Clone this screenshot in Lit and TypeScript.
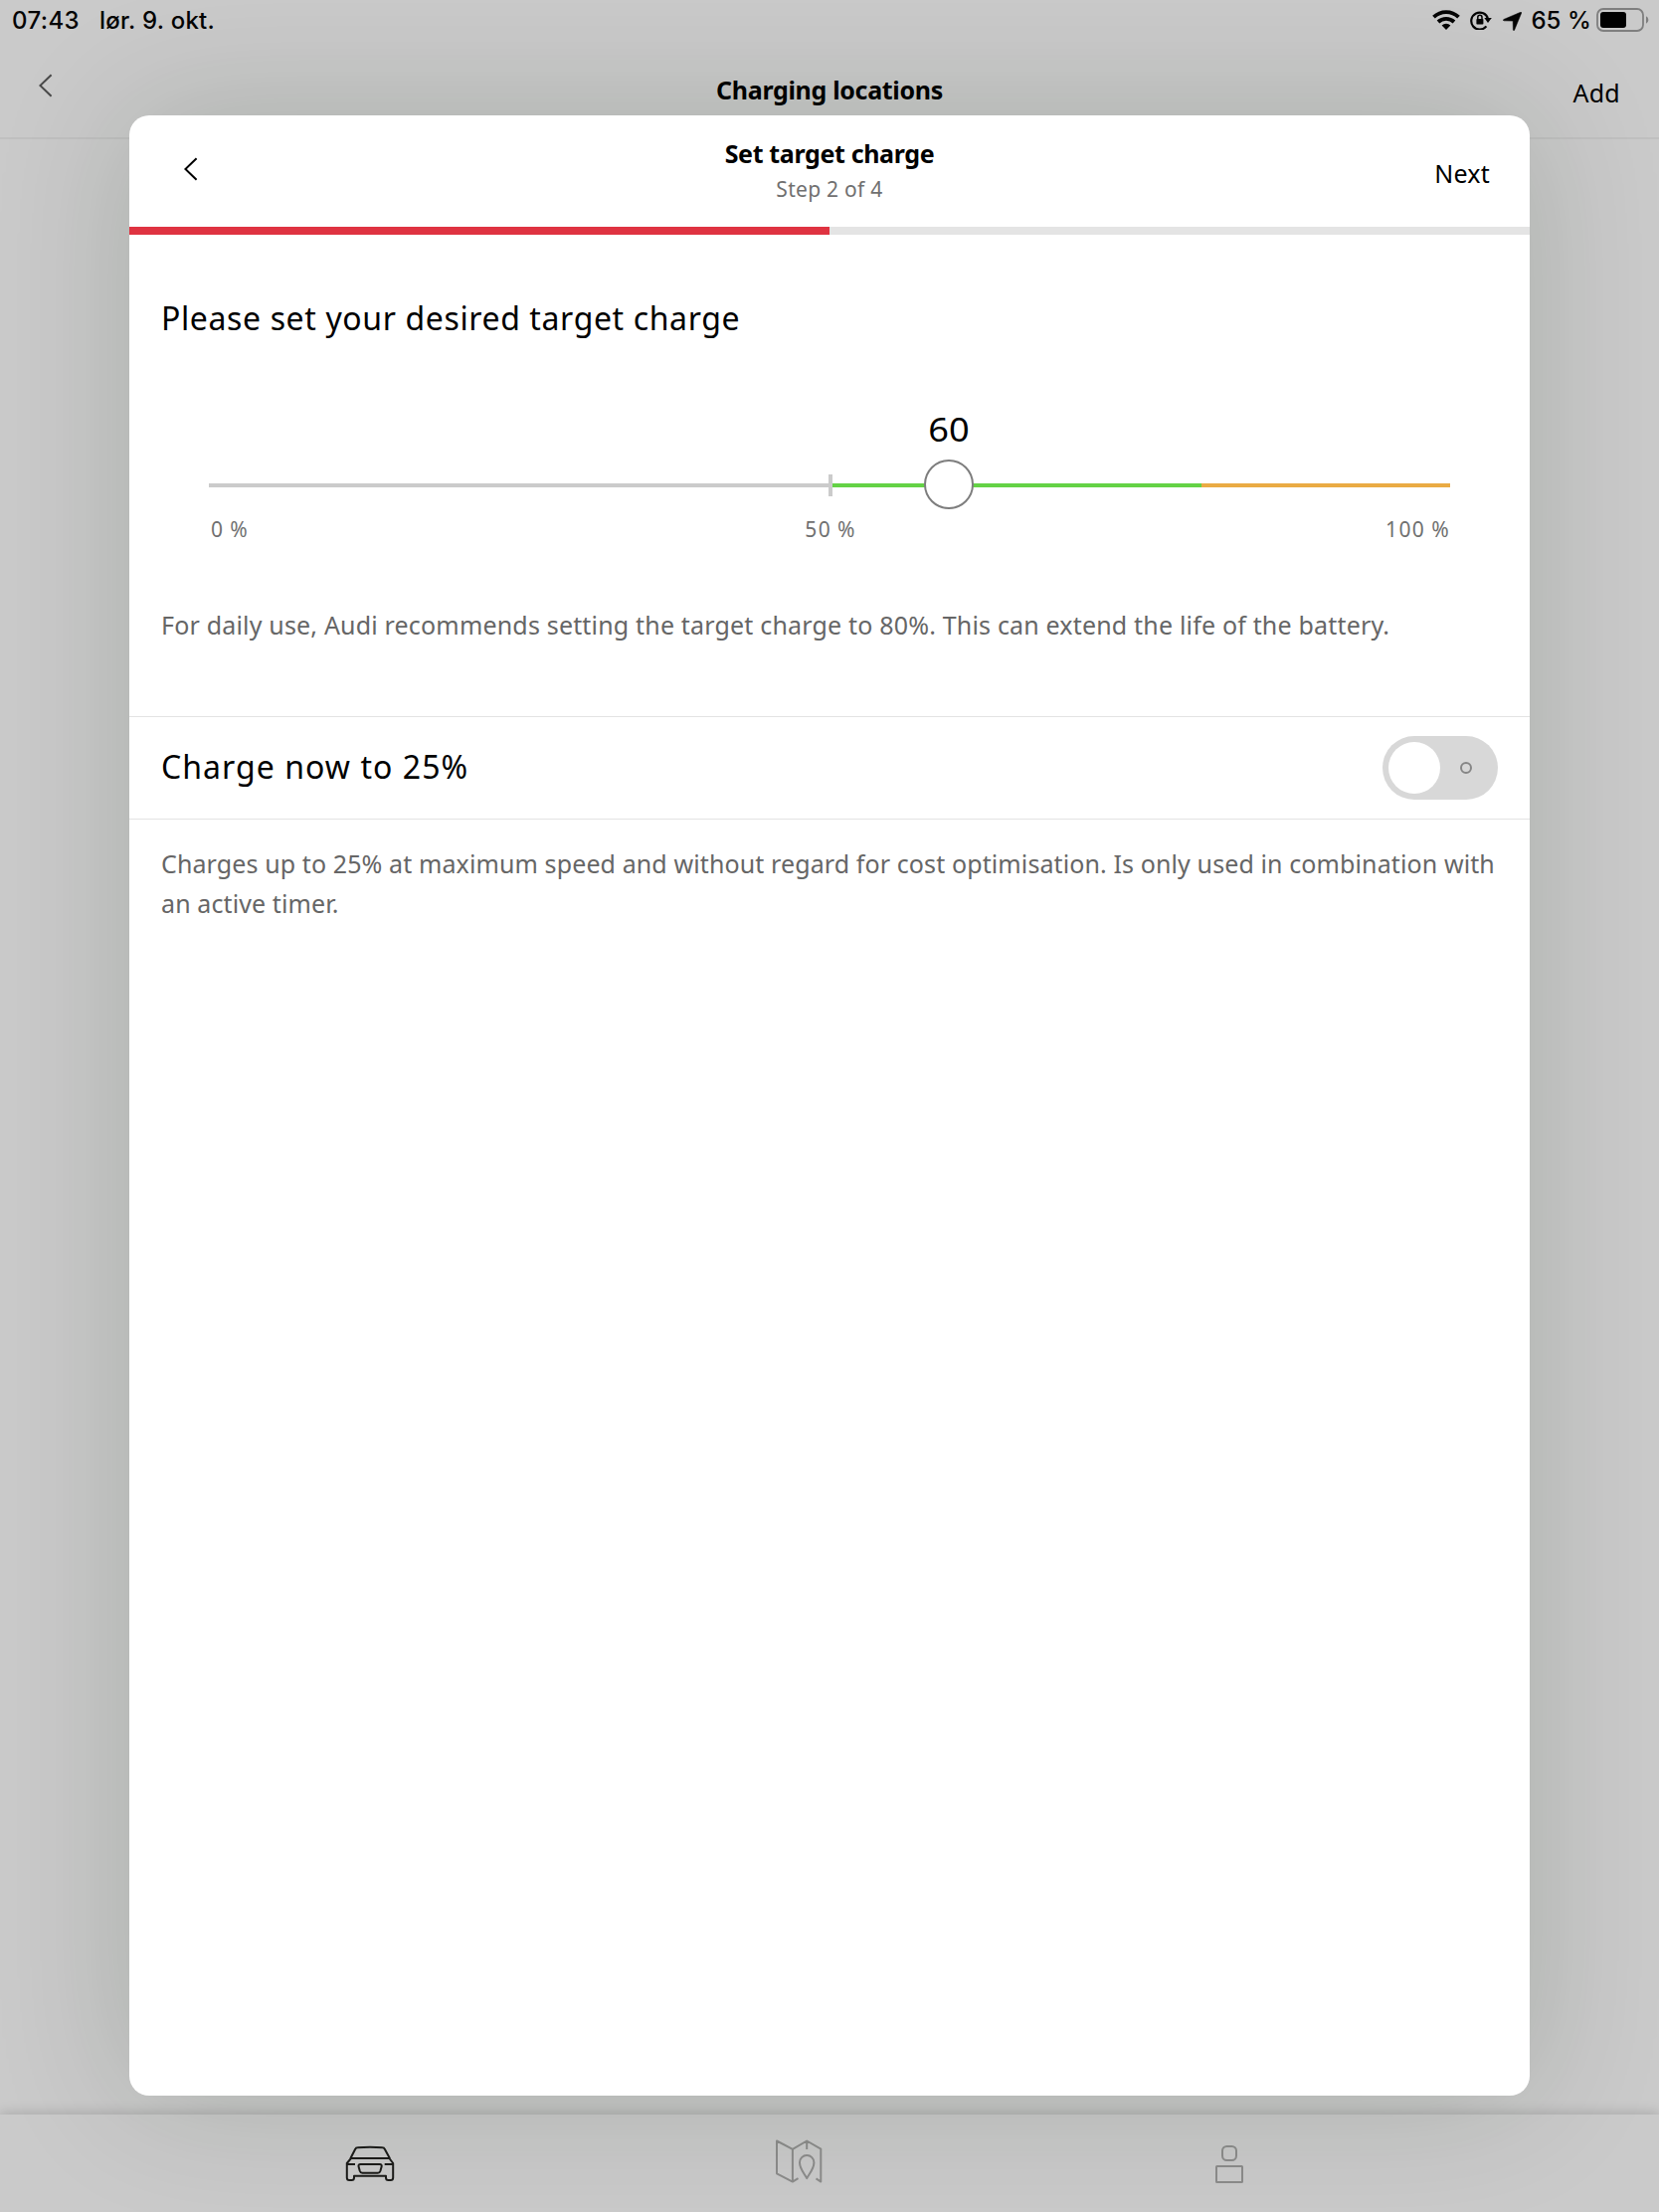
import { LitElement, html, css, svg } from "lit";
import { customElement, property, state } from "lit/decorators.js";
import { classMap } from "lit/directives/class-map.js";
import { styleMap } from "lit/directives/style-map.js";

@customElement("status-bar")
class StatusBar extends LitElement {
  static styles = css`
    :host {
      display: flex;
      align-items: center;
      height: 39px;
      padding: 0 9px 0 12px;
      font: 500 24px/39px Inter, "Liberation Sans", sans-serif;
      color: #050505;
    }
    .time { letter-spacing: 0.4px; margin-right: 20px; padding-top: 2px; }
    .date { letter-spacing: 0.25px; flex: 1; padding-top: 2px; }
    .level { letter-spacing: 0.1px; margin: 0 5px 0 9px; padding-top: 2px; white-space: pre; }
    svg { display: block; }
    .battery { margin-top: 1px; }
    .arrow { margin-top: 3px; }
    .wifi { margin-right: 10px; margin-top: 1px; }
    .lock { margin-right: 11px; margin-top: 1px; }
  `;

  render() {
    return html`
      <span class="time">07:43</span>
      <span class="date">lør. 9. okt.</span>
      <svg class="wifi" width="28" height="20" viewBox="0 0 28 20">
        <g fill="none" stroke="#050505" stroke-width="3.8">
          <path d="M1.5 7.2a18 18 0 0 1 25 0" />
          <path d="M6 12a11.6 11.6 0 0 1 16 0" />
        </g>
        <path d="M9.6 15.4a6.4 6.4 0 0 1 8.8 0L14 20z" fill="#050505" />
      </svg>
      <svg class="lock" width="22" height="20" viewBox="0 0 22 20">
        <path d="M16.4 16.4A8.5 8.5 0 1 1 18 9" fill="none" stroke="#050505" stroke-width="2.2" />
        <path d="M14.4 8h7.400L18 13z" fill="#050505" />
        <rect x="6.4" y="9" width="7" height="5.6" rx="0.8" fill="#050505" />
        <path d="M7.8 9V7.4a2.100 2.100 0 0 1 4.200 0V9" fill="none" stroke="#050505" stroke-width="1.5" />
      </svg>
      <svg class="arrow" width="19" height="19" viewBox="0 0 18 18">
        <path d="M17 .2Q18 0 17.700 1L11 17.200q-.8 1.200-1.200-.2L9.600 8.600 1 8.400Q-.4 8 .8 7.100z" fill="#050505" stroke="#050505" stroke-width=".5" />
      </svg>
      <span class="level">65 %</span>
      <svg class="battery" width="54" height="24" viewBox="0 0 54 24">
        <rect x="1" y="1" width="46" height="22" rx="6" fill="none" stroke="#7f7f7f" stroke-width="1.8" />
        <rect x="4" y="4" width="26" height="16" rx="3" fill="#000" />
        <path d="M50 8.200a4.200 4.200 0 0 1 0 7.600z" fill="#7f7f7f" />
      </svg>
    `;
  }
}

@customElement("charge-slider")
class ChargeSlider extends LitElement {
  static styles = css`
    :host { display: block; }
    .rail { position: relative; display: flex; height: 50px; align-items: center; }
    .segment { height: 4px; margin-top: 2px; }
    .low { background: #cbcbcb; }
    .good { background: #64d246; }
    .high { background: #eaab44; }
    .tick { position: absolute; left: 50%; top: 15px; width: 4px; height: 22px; margin-left: -1px; background: #cbcbcb; }
    .thumb {
      position: absolute;
      top: 0;
      width: 50px;
      height: 50px;
      box-sizing: border-box;
      border: 2px solid #7e7e7e;
      border-radius: 50%;
      background: #fff;
    }
    .value {
      position: absolute;
      bottom: 56px;
      left: -25px;
      width: 96px;
      text-align: center;
      font-size: 32px;
      line-height: 44px;
      color: #000;
      transform: scaleX(1.13);
    }
    .scale {
      display: grid;
      grid-template-columns: 1fr 1fr 1fr;
      margin-top: 5px;
      font-size: 21px;
      line-height: 30px;
      letter-spacing: 1.4px;
      word-spacing: -1px;
      color: #707070;
    }
    .start { padding-left: 2px; }
    .middle { text-align: center; padding-left: 2px; }
    .end { text-align: right; }
  `;

  @property({ type: Number }) value = 60;

  render() {
    const thumb = { left: `calc((100% - 50px) * ${this.value / 100})` };
    return html`
      <div class="rail">
        ${[["low", 50], ["good", 30], ["high", 20]].map(
          ([name, share]) => html`<div class="segment ${name}" style=${styleMap({ width: `${share}%` })}></div>`
        )}
        <div class="tick"></div>
        <div class="thumb" style=${styleMap(thumb)}><div class="value">${this.value}</div></div>
      </div>
      <div class="scale">
        <span class="start">0 %</span><span class="middle">50 %</span><span class="end">100 %</span>
      </div>
    `;
  }
}

@customElement("toggle-switch")
class ToggleSwitch extends LitElement {
  static styles = css`
    .track {
      display: flex;
      align-items: center;
      justify-content: space-between;
      box-sizing: border-box;
      width: 116px;
      height: 64px;
      padding: 0 26px 0 6px;
      border-radius: 32px;
      background: #d8d8d8;
    }
    .track.on { flex-direction: row-reverse; background: #64d246; padding: 0 6px 0 26px; }
    .knob { width: 52px; height: 52px; border-radius: 50%; background: #fff; }
    .ring { box-sizing: border-box; width: 12px; height: 12px; border: 2px solid #868686; border-radius: 50%; }
  `;

  @property({ type: Boolean }) on = false;

  render() {
    return html`<div class=${classMap({ track: true, on: this.on })}>
      <div class="knob"></div><div class="ring"></div>
    </div>`;
  }
}

@customElement("app-root")
class AppRoot extends LitElement {
  static styles = css`
    :host {
      display: block;
      position: relative;
      width: 1668px;
      height: 2224px;
      overflow: hidden;
      font-family: "Noto Sans", "Liberation Sans", sans-serif;
      color: #000;
    }
    .page { display: flex; flex-direction: column; height: 100%; background: #cacaca; }
    .nav {
      display: grid;
      grid-template-columns: 1fr auto 1fr;
      align-items: center;
      height: 99px;
      padding: 0 40px;
      border-bottom: 2px solid #c0c0c0;
      font-size: 25px;
      line-height: 36px;
    }
    .nav-title { font-weight: 700; letter-spacing: -0.33px; padding-top: 2px; }
    .nav-back { padding-bottom: 5px; margin-left: -1px; }
    .action { text-align: right; letter-spacing: 0.25px; margin-right: -1px; }
    .nav .action { padding-top: 8px; }
    .content { flex: 1; }
    .tabs {
      display: grid;
      grid-template-columns: repeat(3, 432px);
      justify-items: center;
      align-items: center;
      height: 98px;
      padding-left: 156px;
      background: #cacaca;
      box-shadow: 0 -1px 12px rgba(0, 0, 0, 0.18);
    }
    svg { display: block; fill: none; }
    .sheet {
      position: absolute;
      inset: 116px 130px 117px 130px;
      display: flex;
      flex-direction: column;
      border-radius: 20px;
      background: #fff;
      box-shadow: 0 0 140px rgba(0, 32, 8, 0.165);
      overflow: hidden;
    }
    .head {
      display: grid;
      grid-template-columns: 1fr auto 1fr;
      align-items: center;
      height: 112px;
      padding: 0 41px 0 55px;
    }
    .head-back { padding-bottom: 4px; }
    .head .action { font-size: 25px; line-height: 36px; padding-top: 4px; }
    .titles {
      display: flex;
      flex-direction: column;
      align-items: center;
      align-self: start;
      gap: 2px;
      padding-top: 20px;
      margin-left: -14px;
    }
    .title { font-size: 25px; line-height: 37px; font-weight: 700; letter-spacing: -0.35px; }
    .step { font-size: 21px; line-height: 30px; letter-spacing: 0.28px; color: #707070; }
    .progress { height: 8px; background: #e4e4e4; }
    .done { height: 100%; background: #df3341; }
    .target { height: 484px; box-sizing: border-box; padding: 62px 31px 0 32px; }
    .heading { font-size: 32px; line-height: 44px; letter-spacing: 0.62px; }
    .target charge-slider { margin: 120px 49px 0 48px; }
    .note { font-size: 25px; line-height: 40px; color: #666; }
    .target .note { margin-top: 61px; letter-spacing: 0.18px; }
    .row {
      display: flex;
      align-items: center;
      justify-content: space-between;
      height: 102px;
      padding: 0 32px;
      border: solid #e3e3e3;
      border-width: 1px 0;
    }
    .row-label { font-size: 32px; line-height: 44px; letter-spacing: 1.05px; padding-bottom: 2px; }
    .hint { padding: 24px 28px 0 32px; letter-spacing: 0.108px; }
  `;

  @state() private step = 2;
  @state() private target = 60;

  private chevron(color: string) {
    return html`<svg width="15" height="24" viewBox="0 0 15 24">
      <path d="M12.6 1.2 1.4 12l11.2 10.8" stroke=${color} stroke-width="2" />
    </svg>`;
  }

  private tabIcon(shape: unknown, color: string) {
    return html`<svg width="64" height="64" viewBox="0 0 64 64" stroke=${color} stroke-width="2" stroke-linejoin="round">
      ${shape}
    </svg>`;
  }

  render() {
    const car = svg`<path d="M12.3 27.2 17.2 17.8Q17.8 16.4 19.4 16.3q12.6-1.2 25.2 0 1.6.1 2.2 1.5L52 27.2M13 27h38.4M13 27l-4.2 5V46.6q0 2.5 2.4 2.5h2.3q2.5 0 2.5-2.5V44.8h32v1.8q0 2.5 2.5 2.5h2.3q2.4 0 2.4-2.5V32l-3.8-5M9 33h8M46.7 33h8.3M22.5 33h19.2q2.5 0 1.9 2.4l-1.2 4.4q-.6 1.9-2.500 1.9H24.300q-1.900 0-2.500-1.900l-1.200-4.400Q20 33 22.500 33z" />`;
    const map = svg`<path d="M24.900 50.600 9 42.300V9.500l15.900 8.300 14.300-8.300L53.300 17.700v32.900l-4.800-3.200M24.900 17.800v32.800l5.600-3.400M39.200 9.700v8.400M39.200 47.200c-1.800-4-7.200-9.200-7.200-16a7.200 7.200 0 0 1 14.400 0c0 6.800-5.400 12-7.200 16z" />`;
    const person = svg`<rect x="25" y="15" width="14" height="14" rx="4.5" /><rect x="19" y="35" width="26" height="16" rx=".6" />`;
    return html`
      <div class="page">
        <status-bar></status-bar>
        <div class="nav">
          <div class="nav-back">${this.chevron("#4a4a4a")}</div>
          <div class="nav-title">Charging locations</div>
          <div class="action">Add</div>
        </div>
        <div class="content"></div>
        <div class="tabs">
          ${this.tabIcon(car, "#1c1c1a")} ${this.tabIcon(map, "#8c8c8b")} ${this.tabIcon(person, "#8c8c8b")}
        </div>
      </div>
      <div class="sheet">
        <div class="head">
          <div class="head-back">${this.chevron("#000")}</div>
          <div class="titles">
            <div class="title">Set target charge</div>
            <div class="step">Step ${this.step} of 4</div>
          </div>
          <div class="action">Next</div>
        </div>
        <div class="progress"><div class="done" style=${styleMap({ width: `${this.step * 25}%` })}></div></div>
        <div class="target">
          <div class="heading">Please set your desired target charge</div>
          <charge-slider .value=${this.target}></charge-slider>
          <div class="note">For daily use, Audi recommends setting the target charge to 80%. This can extend the life of the battery.</div>
        </div>
        <div class="row">
          <div class="row-label">Charge now to 25%</div>
          <toggle-switch></toggle-switch>
        </div>
        <div class="note hint">Charges up to 25% at maximum speed and without regard for cost optimisation. Is only used in combination with an active timer.</div>
      </div>
    `;
  }
}
